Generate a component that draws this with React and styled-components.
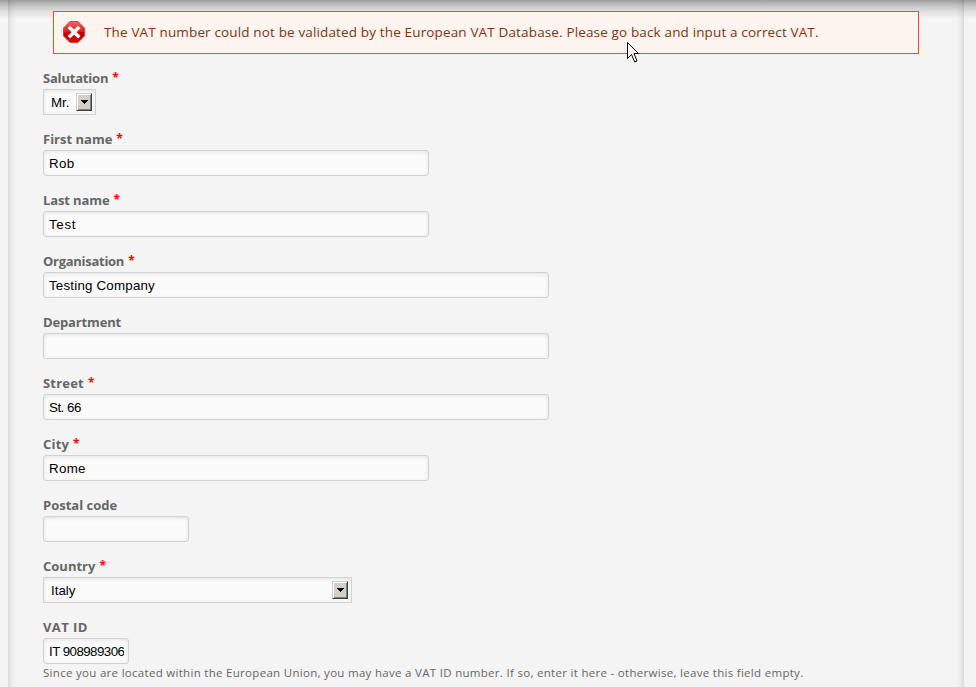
import React from "react";
import styled, { createGlobalStyle } from "styled-components";

const GlobalStyle = createGlobalStyle`
  * { box-sizing: border-box; }
  body { margin: 0; background: #f4f4f4; overflow: hidden; }
`;

const Page = styled.div`
  position: relative;
  height: 687px;
  padding: 0 12px 0 8px;
  overflow: hidden;
  background: #f4f4f4;
  font-family: "Open Sans", "Noto Sans", sans-serif;
`;

const TopShade = styled.div`
  position: absolute;
  inset: 0 0 auto 0;
  height: 19px;
  pointer-events: none;
  background: linear-gradient(rgba(0, 0, 0, 0.36), rgba(0, 0, 0, 0.22) 25%, rgba(0, 0, 0, 0.09) 58%, transparent);
`;

const Panel = styled.main`
  height: 687px;
  padding: 11px 45px 0 35px;
  background:
    linear-gradient(to right, rgba(0, 0, 0, 0.11), rgba(0, 0, 0, 0.04) 40%, transparent) left / 8px 100% no-repeat,
    linear-gradient(to left, rgba(0, 0, 0, 0.11), rgba(0, 0, 0, 0.04) 40%, transparent) right / 8px 100% no-repeat,
    #f4f4f4;
`;

const Alert = styled.div`
  position: relative;
  z-index: 1;
  display: flex;
  align-items: center;
  height: 43px;
  margin-left: 10px;
  padding: 0 0 2px 9px;
  border: 1px solid #e9541d;
  background: #fef5f1;
  color: #8c2e0b;
  font-size: 13.5px;
  white-space: nowrap;
`;

const AlertText = styled.span`
  margin-left: 19px;
  letter-spacing: 0.145px;
`;

const Row = styled.div`
  height: 61px;
  padding-top: 14px;
`;

const Label = styled.label`
  display: flex;
  height: 21px;
  line-height: 20px;
  font-size: 13px;
  font-weight: 700;
  color: #666;
  white-space: nowrap;
  letter-spacing: ${(p) => p.$spacing || 0}px;
`;

const Required = styled.span`
  margin-left: 4px;
  color: #f00;
  font-size: 12px;
  letter-spacing: 0;
`;

const Field = styled.div`
  display: flex;
  align-items: center;
  width: ${(p) => p.$width}px;
  height: 26px;
  padding: 0 4px 0 5px;
  border: 1px solid #d2d2d2;
  border-radius: 3px;
  background: #fbfbfb;
  box-shadow: inset 0 1px 4px rgba(0, 0, 0, 0.1);
  color: #000;
  font: 13.33px/20px "Liberation Sans", Arial, sans-serif;
  white-space: nowrap;
`;

const Value = styled.span`
  flex: 1;
  min-width: 0;
  padding-top: 2px;
  overflow: hidden;
  letter-spacing: ${(p) => p.$spacing || 0}px;
`;

const SelectBox = styled(Field)`
  padding: 0 3px 0 7px;
  border-radius: 0;
`;

const DropButton = styled.span`
  display: flex;
  align-items: center;
  justify-content: center;
  width: 16px;
  height: 18px;
  border: 1px solid;
  border-color: #d4d0c8 #404040 #404040 #d4d0c8;
  background: #d4d0c8;
  box-shadow: inset 1px 1px #fff, inset -1px -1px #808080;
`;

const Hint = styled.p`
  margin: -1px 0 0;
  line-height: 20px;
  font-size: 11.5px;
  color: #666;
  white-space: nowrap;
  letter-spacing: 0.297px;
`;

const Pointer = styled.svg`
  position: absolute;
  left: 627px;
  top: 42px;
  z-index: 2;
`;

const ErrorIcon = () => (
  <svg width="22" height="22" viewBox="0 0 22 22">
    <defs>
      <linearGradient id="stop" x2="0" y2="1">
        <stop offset="0" stopColor="#e66" />
        <stop offset=".48" stopColor="#d62020" />
        <stop offset=".52" stopColor="#c90000" />
        <stop offset="1" stopColor="#d40808" />
      </linearGradient>
    </defs>
    <path d="M7 .5h8l6.500 6.500v8L15 21.500H7L.5 15V7z" fill="url(#stop)" stroke="#d52b2b" strokeWidth=".8" />
    <path d="M7.200 7.200l7.800 7.800M15 7.200l-7.800 7.800" stroke="#fff" strokeWidth="3.500" strokeLinecap="square" />
  </svg>
);

const Select = ({ width, children }) => (
  <SelectBox $width={width}>
    <Value>{children}</Value>
    <DropButton>
      <svg width="7" height="4" shapeRendering="crispEdges">
        <path d="M0 0h7v1H6v1H5v1H4v1H3V3H2V2H1V1H0z" />
      </svg>
    </DropButton>
  </SelectBox>
);

const FIELDS = [
  { label: "Salutation", required: true, value: "Mr.", width: 53, select: true, spacing: -0.2 },
  { label: "First name", required: true, value: "Rob", width: 386, valueSpacing: 0.4 },
  { label: "Last name", required: true, value: "Test", width: 386, spacing: -0.12, valueSpacing: 0.7 },
  { label: "Organisation", required: true, value: "Testing Company", width: 506, spacing: -0.28, valueSpacing: 0.2 },
  { label: "Department", value: "", width: 506, spacing: -0.15 },
  { label: "Street", required: true, value: "St. 66", width: 506, spacing: 0.2, valueSpacing: -0.5 },
  { label: "City", required: true, value: "Rome", width: 386, spacing: 0.2, valueSpacing: 0.3 },
  { label: "Postal code", value: "", width: 146 },
  { label: "Country", required: true, value: "Italy", width: 309, select: true },
  { label: "VAT ID", value: "IT 908989306", width: 86, spacing: 0.4, valueSpacing: -0.55 },
];

export default function App() {
  return (
    <Page>
      <GlobalStyle />
      <Panel>
        <Alert>
          <ErrorIcon />
          <AlertText>
            The VAT number could not be validated by the European VAT Database. Please go back and input a correct VAT.
          </AlertText>
        </Alert>
        {FIELDS.map((f) => (
          <Row key={f.label}>
            <Label $spacing={f.spacing}>
              {f.label}
              {f.required && <Required>*</Required>}
            </Label>
            {f.select ? (
              <Select width={f.width}>{f.value}</Select>
            ) : (
              <Field $width={f.width}>
                <Value $spacing={f.valueSpacing}>{f.value}</Value>
              </Field>
            )}
          </Row>
        ))}
        <Hint>
          Since you are located within the European Union, you may have a VAT ID number. If so, enter it here - otherwise, leave this field empty.
        </Hint>
      </Panel>
      <TopShade />
      <Pointer width="13" height="22" viewBox="0 0 13 22">
        <path d="M.5.5v16l4-4 3.200 7.500 2.300-1L7 11.500h4.500z" fill="#fff" stroke="#000" />
      </Pointer>
    </Page>
  );
}
